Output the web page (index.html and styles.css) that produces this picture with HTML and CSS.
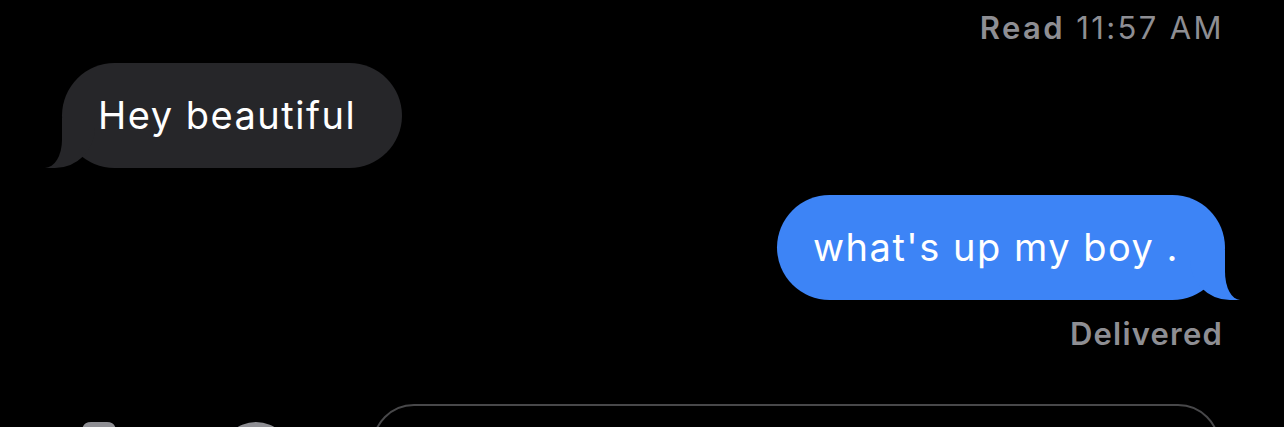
FILE: index.html
```html
<!DOCTYPE html>
<html lang="en">
<head>
    <meta charset="UTF-8">
    <meta name="viewport" content="width=device-width, initial-scale=1.0">
    <title>Messages</title>
    <link rel="stylesheet" href="styles.css">
</head>
<body>
    <div class="thread">
        <div class="receipt read"><b>Read</b> 11:57 AM</div>

        <div class="row">
            <div class="bubble from">Hey beautiful</div>
        </div>

        <div class="row right">
            <div class="bubble to">what's up my boy .</div>
        </div>

        <div class="receipt delivered">Delivered</div>
    </div>

    <div class="composer">
        <!-- camera -->
        <svg class="tool camera" width="60" height="40" viewBox="0 0 60 40">
            <path d="M13 12 Q14 4 22 4 L38 4 Q46 4 47 12 L54 12 Q60 12 60 18 L60 40 L0 40 L0 18 Q0 12 6 12 Z" fill="#8e8e93"/>
        </svg>
        <!-- app store -->
        <svg class="tool apps" width="84" height="40" viewBox="0 0 84 40">
            <circle cx="38" cy="40" r="36" fill="#8e8e93"/>
            <path d="M72 16 L80 22" stroke="#8e8e93" stroke-width="3"/>
        </svg>
        <div class="field"></div>
    </div>
</body>
</html>
```

FILE: styles.css
```css
html, body {
    margin: 0;
    height: 100%;
}

body {
    background-color: #000;
    font-family: Inter, "Noto Sans", sans-serif;
    color: #fff;
    overflow: hidden;
}

.thread {
    display: flex;
    flex-direction: column;
    padding: 9px 62px 0 62px;
}

.receipt {
    align-self: flex-end;
    color: #8e8e93;
    font-size: 31px;
    line-height: 37px;
}

.read {
    letter-spacing: 2.4px;
    margin-right: -2px;
}

.read b {
    font-weight: 600;
}

.delivered {
    font-weight: 600;
    letter-spacing: 1.2px;
    margin-top: 15px;
    margin-right: -1px;
}

.row {
    display: flex;
    margin-top: 17px;
}

.row.right {
    justify-content: flex-end;
    margin-top: 27px;
    margin-right: -3px;
}

.bubble {
    position: relative;
    font-size: 38px;
    line-height: 45px;
    letter-spacing: 1.5px;
    padding: 30px 46px 30px 36px;
    border-radius: 53px;
}

/* tails: a coloured block with a black cut-out over it */
.bubble::before,
.bubble::after {
    content: "";
    position: absolute;
    bottom: 0;
    height: 50px;
}

.from {
    background-color: #262629;
}

.from::before {
    left: -17px;
    width: 50px;
    background-color: #262629;
    border-bottom-right-radius: 40px;
}

.from::after {
    left: -50px;
    width: 50px;
    background-color: #000;
    border-bottom-right-radius: 17px 28px;
}

.to {
    background-color: #3d84f6;
}

.to::before {
    right: -15px;
    width: 50px;
    background-color: #3d84f6;
    border-bottom-left-radius: 40px;
}

.to::after {
    right: -50px;
    width: 50px;
    background-color: #000;
    border-bottom-left-radius: 15px 28px;
}

.composer {
    display: flex;
    align-items: flex-start;
    margin-top: 52px;
    padding-left: 69px;
}

.tool {
    flex: none;
    display: block;
}

.camera {
    margin-top: 14px;
}

.apps {
    margin-left: 89px;
    margin-top: 14px;
}

.field {
    flex: 1;
    height: 80px;
    margin-left: 70px;
    margin-right: 64px;
    border: 2.5px solid #48484a;
    border-radius: 42px;
}
```
